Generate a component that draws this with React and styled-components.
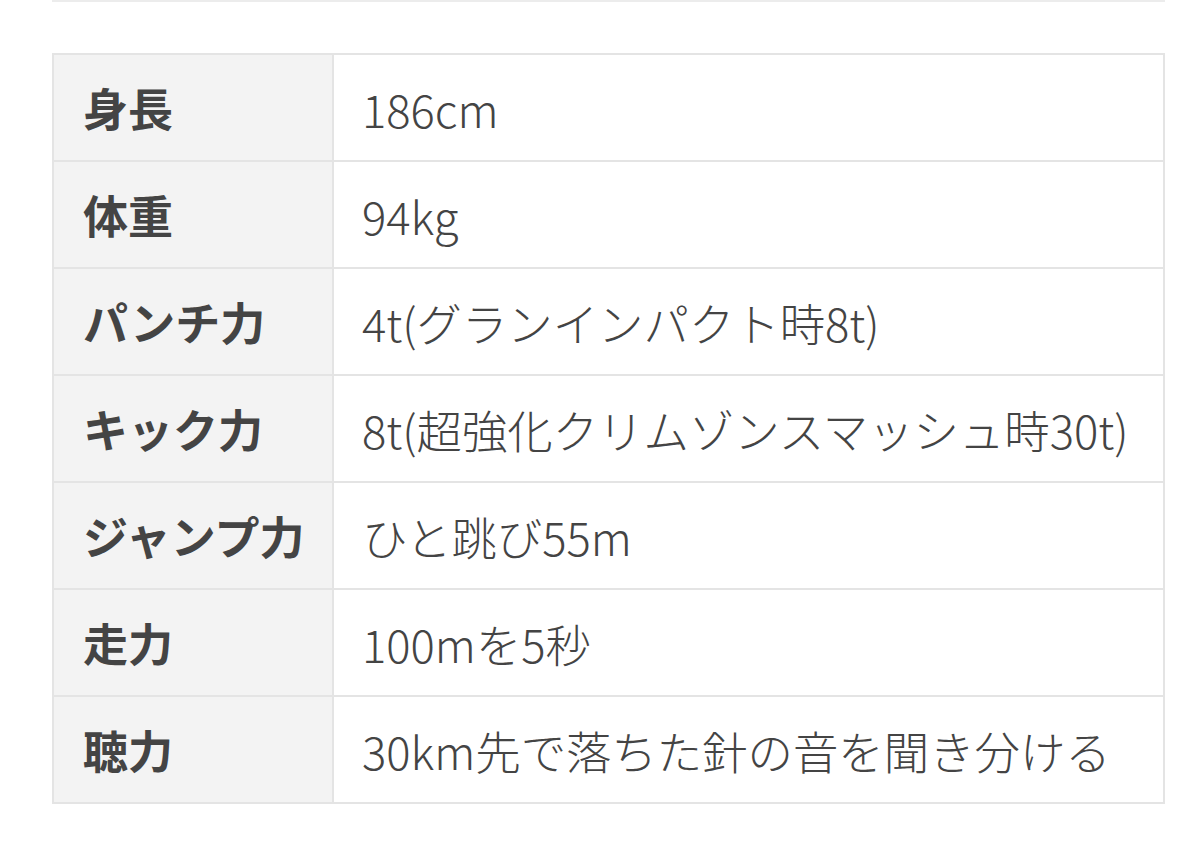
import React from "react";
import styled, { createGlobalStyle } from "styled-components";

const Global = createGlobalStyle`
  html, body { margin: 0; padding: 0; background: #fff; }
  body { font-family: "Noto Sans CJK JP", "Noto Sans", sans-serif; }
`;

const Page = styled.div`
  width: 1113px;
  margin-left: 52px;
`;

const TopRule = styled.div`
  height: 2px;
  background: #ececec;
  margin-bottom: 51px;
`;

const Table = styled.table`
  width: 100%;
  border-collapse: collapse;
  table-layout: fixed;
  border: 2px solid #e4e4e4;
`;

const LabelCol = styled.col`
  width: 280px;
`;

const Row = styled.tr`
  height: 107px;
`;

const Label = styled.th`
  background: #f3f3f3;
  border: 2px solid #e4e4e4;
  text-align: left;
  padding: 0 0 0 29px;
  font-size: 45px;
  font-weight: 700;
  color: #444;
  white-space: nowrap;
  vertical-align: middle;
`;

const Value = styled.td`
  border: 2px solid #e4e4e4;
  padding: 0 0 0 28px;
  font-size: 45.4px;
  font-weight: 300;
  color: #444;
  white-space: nowrap;
  vertical-align: middle;
`;

const rows = [
  ["身長", "186cm"],
  ["体重", "94kg"],
  ["パンチ力", "4t(グランインパクト時8t)"],
  ["キック力", "8t(超強化クリムゾンスマッシュ時30t)"],
  ["ジャンプ力", "ひと跳び55m"],
  ["走力", "100mを5秒"],
  ["聴力", "30km先で落ちた針の音を聞き分ける"],
];

export default function App() {
  return (
    <>
      <Global />
      <Page>
        <TopRule />
        <Table>
          <colgroup>
            <LabelCol />
            <col />
          </colgroup>
          <tbody>
            {rows.map(([k, v]) => (
              <Row key={k}>
                <Label>{k}</Label>
                <Value>{v}</Value>
              </Row>
            ))}
          </tbody>
        </Table>
      </Page>
    </>
  );
}
